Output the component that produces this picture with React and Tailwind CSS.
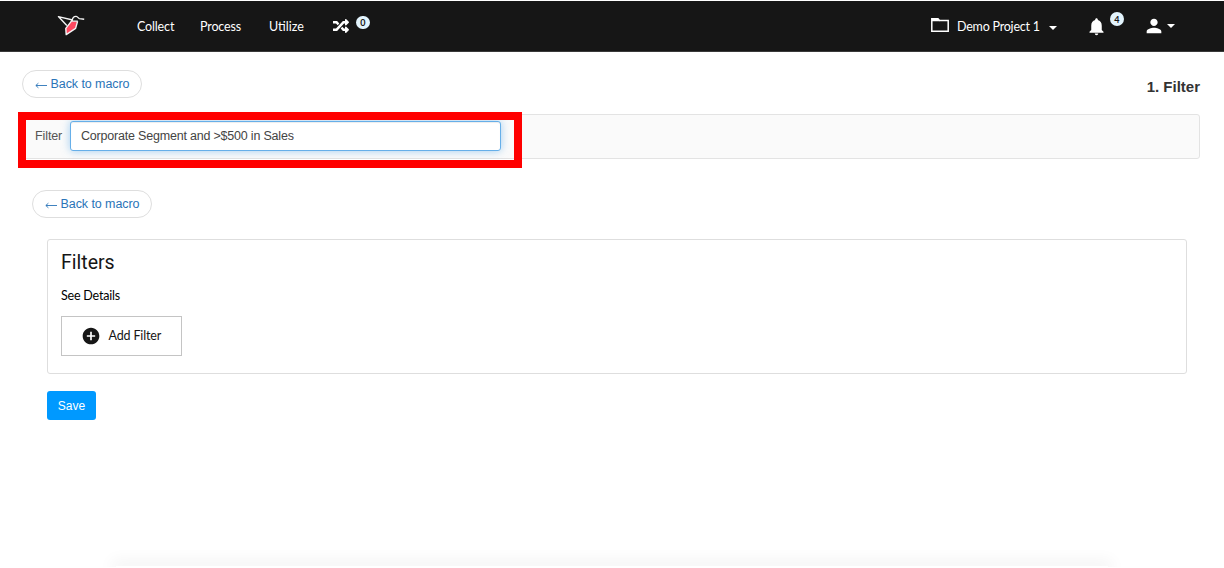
import React, { useState } from 'react';
import { FaRandom } from 'react-icons/fa';
import { MdNotifications, MdPerson, MdAddCircle } from 'react-icons/md';

const Logo = () => (
  <svg width="28" height="22" viewBox="0 0 28 22" fill="none" className="-mt-0.5 shrink-0">
    <path d="M14 7.2 L20.4 7.2 L18.6 14.4 L9.2 20.6 L8.8 14.4 Z" fill="#ff4961" />
    <path
      d="M15.6 6 L1.4 2.6 L9.8 11.4 M15.6 5.6 L8.8 14.4 L9.2 20.6 L18.6 14.4 L20.6 7.2 M15.2 6 C15.8 3.6 17.2 2.2 19.2 2.4 C20.8 2.6 21.2 4.2 22.4 4.6 L27.2 5.2 M14.8 6.9 L20.8 7.1"
      stroke="#f4f4f4"
      strokeWidth="1.4"
      strokeLinejoin="round"
    />
  </svg>
);

const FolderIcon = () => (
  <svg width="18" height="14" viewBox="0 0 18 14" fill="none" className="-mt-0.5 shrink-0">
    <path d="M0.8 0.8 H7 L8.5 2.6 H17.2 V13.2 H0.8 Z" stroke="#fff" strokeWidth="1.5" />
    <path d="M1 0.8 H7 L8.5 3.3 H1 Z" fill="#fff" />
  </svg>
);

const Caret = () => (
  <span className="block h-0 w-0 border-x-[4.5px] border-t-[4.5px] border-x-transparent border-t-white" />
);

const Badge = ({ children }) => (
  <span className="flex h-[13.5px] w-[14.5px] items-center justify-center rounded-full bg-[#e3f4fd] text-[9px] font-bold leading-none text-[#161616]">
    {children}
  </span>
);

const BackButton = () => (
  <button className="flex h-7 w-[120px] items-center justify-center rounded-full border border-[#dedede] bg-white text-[12.5px] tracking-[-0.08px] text-[#2a74b8]">
    <svg width="12" height="8" viewBox="0 0 12 8" fill="none" className="mr-1 mt-px">
      <path d="M12 4.5 H1 M3.4 2.2 L0.8 4.5 L3.4 6.8" stroke="#2a74b8" strokeWidth="0.9" />
    </svg>
    Back to macro
  </button>
);

const Navbar = () => (
  <nav className="mt-px flex h-[51px] shrink-0 items-center border-b border-[#3a3a3a] bg-[#161616] pl-[57px] font-['Lato',sans-serif] text-[12.5px] tracking-[-0.15px] text-white">
    <Logo />
    <a className="ml-[52px] w-[63px] pt-0.5">Collect</a>
    <a className="w-[69px] pt-0.5">Process</a>
    <a className="w-16 pt-0.5 tracking-normal">Utilize</a>
    <FaRandom size={16} />
    <div className="mb-[7px] ml-[6.5px]">
      <Badge>0</Badge>
    </div>
    <div className="ml-auto flex w-[158px] items-center">
      <FolderIcon />
      <span className="ml-2 w-[92px] whitespace-nowrap pt-0.5 tracking-[-0.22px]">Demo Project 1</span>
      <div className="mt-[3px]">
        <Caret />
      </div>
    </div>
    <div className="flex w-[57px] items-center">
      <MdNotifications size={21} className="-ml-[3.5px]" />
      <div className="mb-[14px] ml-[3px]">
        <Badge>4</Badge>
      </div>
    </div>
    <div className="flex w-[78px] items-center">
      <MdPerson size={22} className="-ml-[3px] -mt-px" />
      <div className="ml-[2px]">
        <Caret />
      </div>
    </div>
  </nav>
);

export default function App() {
  const [filter, setFilter] = useState('Corporate Segment and >$500 in Sales');

  return (
    <div className="relative flex h-[567px] flex-col overflow-hidden bg-white font-['Liberation_Sans',Arial,sans-serif] text-[12.5px]">
      <Navbar />

      <div className="mt-[18px] flex h-7 items-center justify-between pl-[22px] pr-6">
        <BackButton />
        <h1 className="mt-1.5 text-[15px] font-bold text-[#333]">1. Filter</h1>
      </div>

      <div className="relative ml-[22px] mr-6 mt-4 flex h-[45px] items-center rounded-[3px] border border-[#e3e3e3] bg-[#fafafa] pl-3">
        <label className="w-[35px] tracking-[-0.1px] text-[#555]">Filter</label>
        <input
          type="text"
          value={filter}
          onChange={(e) => setFilter(e.target.value)}
          className="-mt-px h-[30px] w-[431px] rounded-[3px] border border-[#66afe9] bg-white px-2.5 text-[12.5px] tracking-[-0.2px] text-[#444] shadow-[inset_0_1px_1px_rgba(0,0,0,0.075),0_0_8px_rgba(102,175,233,0.6)] outline-none"
        />
        {/* highlight frame */}
        <div className="pointer-events-none absolute -left-[5px] -top-[3px] h-14 w-[504px] border-8 border-[#ff0000]" />
      </div>

      <div className="ml-8 mt-[31px]">
        <BackButton />
      </div>

      <section className="ml-[47px] mr-[37px] mt-[21px] h-[135px] rounded-[3px] border border-[#dedede] pl-[13px] font-['Lato',sans-serif] text-black">
        <h2 className="mt-[11px] font-['Roboto',sans-serif] text-[19.5px] leading-6 text-[#161616]">Filters</h2>
        <p className="mt-[11px] h-5 text-[12.5px] leading-5 tracking-[-0.2px]">See Details</p>
        <button className="mt-2.5 flex h-10 w-[121px] items-center border border-[#c4c4c4] bg-white pl-5 text-[12.5px] tracking-[-0.15px] text-[#161616]">
          <MdAddCircle size={20} className="-ml-px" />
          <span className="ml-[7.5px] whitespace-nowrap pt-px">Add Filter</span>
        </button>
      </section>

      <button className="ml-[47px] mt-[17px] h-[29px] w-[49px] rounded-[3px] bg-[#0099ff] text-[12px] text-white">
        Save
      </button>

      <div className="mx-[116px] mt-auto h-px shrink-0 shadow-[0_0_16px_4px_rgba(0,0,0,0.07)]" />
    </div>
  );
}
